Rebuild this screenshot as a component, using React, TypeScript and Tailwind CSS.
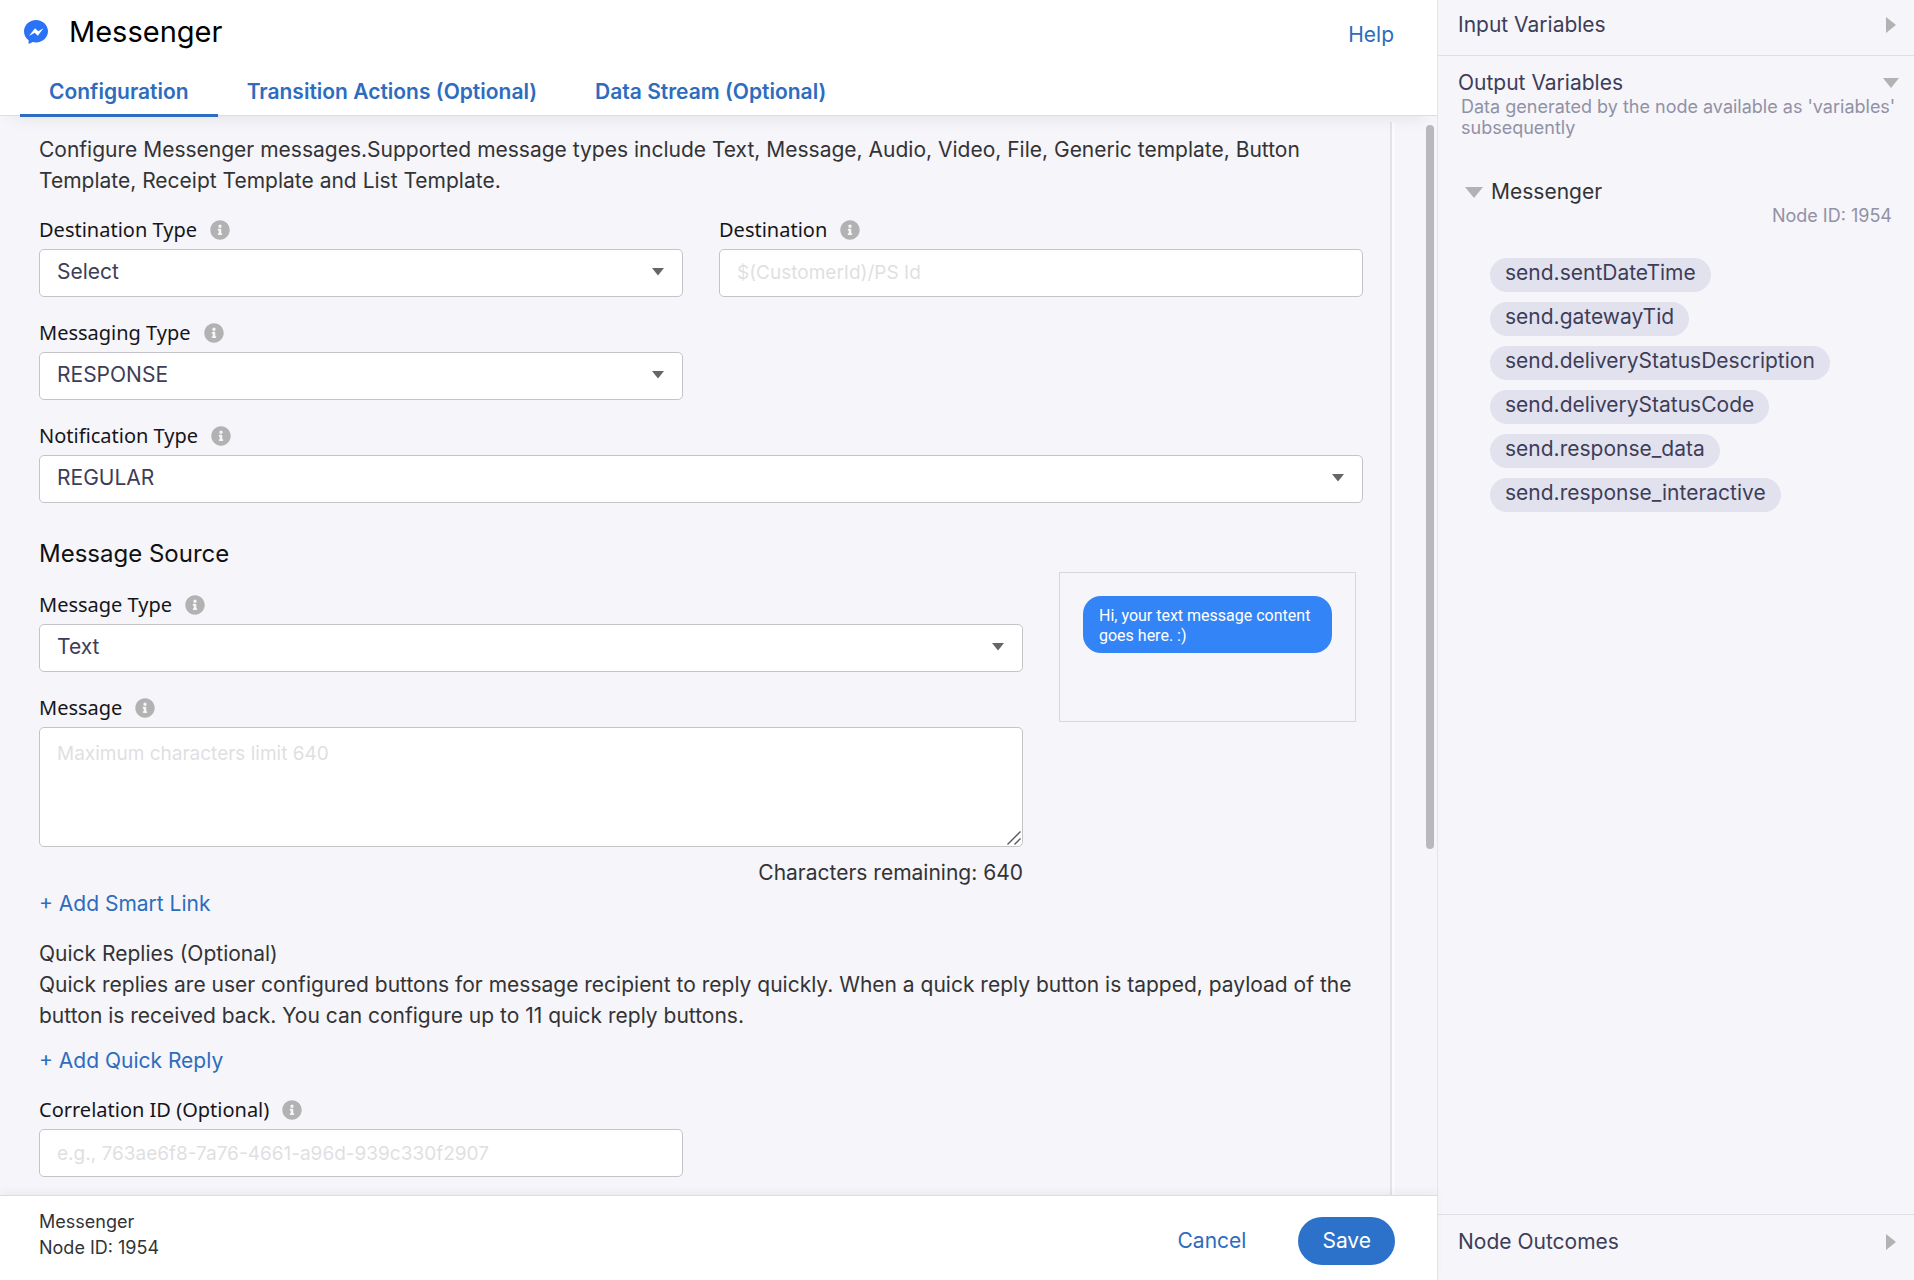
import React, { useState } from 'react';
import { FaInfoCircle } from 'react-icons/fa';

const tabs = ['Configuration', 'Transition Actions (Optional)', 'Data Stream (Optional)'];

const outputVariables = [
  'send.sentDateTime',
  'send.gatewayTid',
  'send.deliveryStatusDescription',
  'send.deliveryStatusCode',
  'send.response_data',
  'send.response_interactive',
];

const fieldClass =
  'block w-full rounded-[5px] border border-[#c4c4c8] bg-white px-[17px] text-[#3e3d58] placeholder:text-[#dfdfe3] outline-none focus:border-[#2d72ca]';

const MessengerLogo = () => (
  <svg className="h-6 w-6 shrink-0" viewBox="0 0 24 24" aria-hidden="true">
    <path
      d="M12 0C5.4 0 0 5 0 11.4c0 3.6 1.8 6.8 4.6 8.800V24l4.200-2c1 .3 2.100.5 3.200.5 6.600 0 12-5 12-11.200S18.600 0 12 0z"
      fill="#2a73f8"
    />
    <path d="M5 16l6-7.700 3.300 2.900 5.200-2.900-5.700 7.500-3.100-3z" fill="#fff" />
  </svg>
);

const Label = ({ htmlFor, children }: { htmlFor: string; children: React.ReactNode }) => (
  <div className="flex h-[38px] items-center gap-[13px]">
    <label htmlFor={htmlFor} className="font-['Noto_Sans',sans-serif] text-xl text-[#16161a]">
      {children}
    </label>
    <FaInfoCircle className="size-5 text-[#b2b2b2]" />
  </div>
);

const SelectField = ({ id, label, options }: { id: string; label: string; options: string[] }) => (
  <div>
    <Label htmlFor={id}>{label}</Label>
    <div className="relative">
      <select id={id} className={`${fieldClass} h-12 appearance-none pb-0.5 text-[21px]`}>
        {options.map((option) => (
          <option key={option}>{option}</option>
        ))}
      </select>
      <svg className="pointer-events-none absolute right-[19px] top-[19px] h-2 w-3" viewBox="0 0 12 8">
        <path d="M0 0h12L6 7.500z" fill="#666" />
      </svg>
    </div>
  </div>
);

const ArrowRight = () => (
  <svg className="h-4 w-2.5" viewBox="0 0 10 16">
    <path d="M0 0l10 8-10 8z" fill="#b2b2b2" />
  </svg>
);

const ArrowDown = () => (
  <svg className="h-2.5 w-4" viewBox="0 0 16 10">
    <path d="M0 0h16L8 10z" fill="#b2b2b2" />
  </svg>
);

const App = () => {
  const [activeTab, setActiveTab] = useState(0);

  return (
    <div className="flex h-screen bg-[#f5f5fa] font-[Inter,sans-serif] text-[21px] text-[#333336]">
      <main className="flex min-w-0 flex-1 flex-col">
        {/* Header */}
        <header className="relative z-10 border-b border-[#dedee2] bg-white shadow-[0_14px_16px_-12px_rgba(0,0,0,0.08)]">
          <div className="flex h-[70px] items-center justify-between pl-6 pr-[43px]">
            <div className="flex items-center gap-[21px] pb-1.5">
              <MessengerLogo />
              <h1 className="text-[29px] leading-9 text-black">Messenger</h1>
            </div>
            <a href="#help" className="text-[#2d6cbe]">Help</a>
          </div>
          <nav className="-mb-0.5 flex pl-5">
            {tabs.map((tab, index) => (
              <button
                key={tab}
                onClick={() => setActiveTab(index)}
                className={`h-[47px] border-b-3 px-[29px] font-semibold text-[#2d6cbe] ${
                  activeTab === index ? 'border-[#2d6cbe]' : 'border-transparent'
                }`}
              >
                {tab}
              </button>
            ))}
          </nav>
        </header>

        {/* Scrollable form */}
        <div className="flex min-h-0 flex-1">
          <div className="mt-1.5 min-w-0 flex-1 overflow-hidden border-r-2 border-[#e4e4e6] pl-[39px] pr-[27px]">
            <p className="mt-3 leading-[31px]">
              Configure Messenger messages.Supported message types include Text, Message, Audio, Video, File, Generic template, Button
              Template, Receipt Template and List Template.
            </p>

            <div className="mt-[15px] grid grid-cols-2 gap-x-9 gap-y-[17px]">
              <SelectField id="destination-type" label="Destination Type" options={['Select', 'Customer ID', 'PS ID']} />
              <div>
                <Label htmlFor="destination">Destination</Label>
                <input id="destination" type="text" placeholder="$(CustomerId)/PS Id" className={`${fieldClass} h-12 pb-0.5 text-[19px]`} />
              </div>
              <SelectField id="messaging-type" label="Messaging Type" options={['RESPONSE', 'UPDATE', 'MESSAGE_TAG']} />
              <div className="col-span-2">
                <SelectField id="notification-type" label="Notification Type" options={['REGULAR', 'SILENT_PUSH', 'NO_PUSH']} />
              </div>
            </div>

            <div className="mt-9 flex gap-9">
              <div className="flex-1">
                <h2 className="text-2xl leading-[30px] text-[#111]">Message Source</h2>
                <div className="mt-[17px]">
                  <SelectField id="message-type" label="Message Type" options={['Text', 'Message', 'Audio', 'Video', 'File']} />
                </div>
                <div className="mt-[17px]">
                  <Label htmlFor="message">Message</Label>
                  <div className="relative">
                    <textarea
                      id="message"
                      placeholder="Maximum characters limit 640"
                      className={`${fieldClass} h-[120px] resize-none py-3 text-[19px] leading-7`}
                    />
                    <svg className="pointer-events-none absolute bottom-0.5 right-0.5 size-3.5" viewBox="0 0 14 14">
                      <path d="M0.500 13.500L13.500 0.500M7.500 13.500l6-6" fill="none" stroke="#555" strokeWidth="1.300" />
                    </svg>
                  </div>
                </div>
                <p className="mt-2.5 text-right leading-[31px]">Characters remaining: 640</p>
                <button className="block leading-[31px] text-[#2d6cbe]">+ Add Smart Link</button>
              </div>

              {/* Message preview */}
              <div className="mr-[7px] mt-[33px] h-[150px] w-[297px] border border-[#d8d8dc] px-[23px] py-[23px]">
                <p className="rounded-[18px] bg-[#3385f7] px-4 pb-[7px] pt-2.5 font-[Roboto,sans-serif] text-base leading-5 text-white">
                  Hi, your text message content goes here. :)
                </p>
              </div>
            </div>

            <section className="mt-[19px] leading-[31px]">
              <h3>Quick Replies (Optional)</h3>
              <p>
                Quick replies are user configured buttons for message recipient to reply quickly. When a quick reply button is tapped, payload of the
                button is received back. You can configure up to 11 quick reply buttons.
              </p>
              <button className="mt-3.5 block text-[#2d6cbe]">+ Add Quick Reply</button>
            </section>

            <div className="mt-[15px] w-[calc(50%-18px)]">
              <Label htmlFor="correlation-id">Correlation ID (Optional)</Label>
              <input
                id="correlation-id"
                type="text"
                placeholder="e.g., 763ae6f8-7a76-4661-a96d-939c330f2907"
                className={`${fieldClass} h-12 text-[19px]`}
              />
            </div>
          </div>
          <div className="mt-1.5 flex w-[45px] justify-end border-l-3 border-[#fbfbfd] pr-[3px]">
            <div className="mt-[3px] h-[67.5%] w-2 rounded-full bg-[#b9b9bb]" />
          </div>
        </div>

        {/* Footer */}
        <footer className="relative flex h-[85px] items-center justify-between border-t border-[#dcdce0] bg-white pl-[39px] pr-[42px] shadow-[0_-4px_8px_rgba(0,0,0,0.04)]">
          <div className="pb-1.5 text-lg leading-[26px]">
            <p>Messenger</p>
            <p>Node ID: 1954</p>
          </div>
          <div className="flex items-center gap-[52px] pt-1.5">
            <button className="text-[#2d6cbe]">Cancel</button>
            <button className="h-12 rounded-full bg-[#2d72ca] px-6 text-white">Save</button>
          </div>
        </footer>
      </main>

      {/* Variables sidebar */}
      <aside className="flex w-[477px] shrink-0 flex-col border-l border-[#e4e4ea] text-[#3e3d58]">
        <button className="flex h-14 items-center justify-between border-b border-[#dedee6] pb-1.5 pl-5 pr-[18px]">
          Input Variables
          <ArrowRight />
        </button>
        <section className="flex-1 pt-3.5">
          <button className="flex w-full items-center justify-between pl-5 pr-[15px] leading-[26px]">
            Output Variables
            <ArrowDown />
          </button>
          <p className="pl-[23px] pr-3 text-lg leading-[21px] text-[#9291a5]">
            Data generated by the node available as 'variables' subsequently
          </p>
          <button className="mt-[39px] flex items-center gap-2 pl-[27px] leading-[30px] text-[#333336]">
            <svg className="h-[11px] w-[18px]" viewBox="0 0 18 11">
              <path d="M0 0h18L9 11z" fill="#b2b2b2" />
            </svg>
            Messenger
          </button>
          <p className="pr-[22px] text-right text-lg leading-[18px] text-[#9291a5]">Node ID: 1954</p>
          <ul className="mt-[33px] flex flex-col items-start gap-2.5 pl-[52px]">
            {outputVariables.map((variable) => (
              <li key={variable} className="h-[34px] rounded-full bg-[#e2e2ef] px-[15px] leading-[30px]">
                {variable}
              </li>
            ))}
          </ul>
        </section>
        <button className="flex h-[66px] items-center justify-between border-t border-[#dedee6] pb-3 pl-5 pr-[18px]">
          Node Outcomes
          <ArrowRight />
        </button>
      </aside>
    </div>
  );
};

export default App;
